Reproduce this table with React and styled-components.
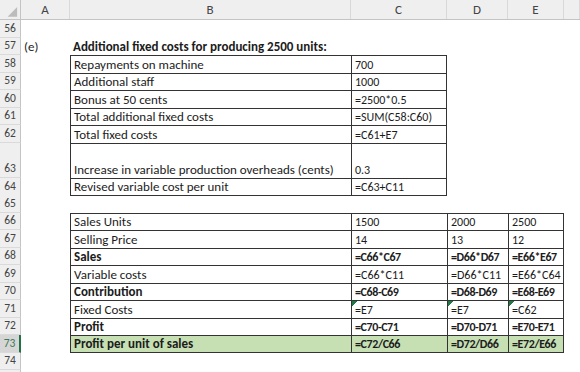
import React from 'react'
import styled, { createGlobalStyle } from 'styled-components'

const GlobalStyle = createGlobalStyle`
  html, body {
    margin: 0;
    padding: 0;
    background: #fff;
  }
  body {
    font-family: Carlito, Calibri, Lato, "Open Sans", sans-serif;
    color: #1c1c1c;
  }
`

// row header, A, B, C, D, E, F
const COLS = '21px 49px 281px 96px 61px 56px 1fr'
const ROW_H = 17.5

const rows = [
  { n: 56 },
  { n: 57, a: '(e)', b: 'Additional fixed costs for producing 2500 units:', titleBold: true },
  { n: 58, box: 2, top: true, b: 'Repayments on machine', c: '700' },
  { n: 59, box: 2, b: 'Additional staff', c: '1000' },
  { n: 60, box: 2, b: 'Bonus at 50 cents', c: '=2500*0.5' },
  { n: 61, box: 2, b: 'Total additional fixed costs', c: '=SUM(C58:C60)' },
  { n: 62, box: 2, b: 'Total fixed costs', c: '=C61+E7' },
  { n: 63, h: 2, box: 2, b: 'Increase in variable production overheads (cents)', c: '0.3' },
  { n: 64, box: 2, bottom: true, b: 'Revised variable cost per unit', c: '=C63+C11' },
  { n: 65 },
  { n: 66, box: 4, top: true, b: 'Sales Units', c: '1500', d: '2000', e: '2500' },
  { n: 67, box: 4, b: 'Selling Price', c: '14', d: '13', e: '12' },
  { n: 68, box: 4, bold: true, b: 'Sales', c: '=C66*C67', d: '=D66*D67', e: '=E66*E67' },
  { n: 69, box: 4, b: 'Variable costs', c: '=C66*C11', d: '=D66*C11', e: '=E66*C64' },
  { n: 70, box: 4, bold: true, b: 'Contribution', c: '=C68-C69', d: '=D68-D69', e: '=E68-E69' },
  { n: 71, box: 4, flag: true, b: 'Fixed Costs', c: '=E7', d: '=E7', e: '=C62' },
  { n: 72, box: 4, bold: true, b: 'Profit', c: '=C70-C71', d: '=D70-D71', e: '=E70-E71' },
  { n: 73, box: 4, bold: true, fill: true, selected: true, bottom: true, b: 'Profit per unit of sales', c: '=C72/C66', d: '=D72/D66', e: '=E72/E66' },
  { n: 74 },
  { n: '' },
]

const App = () => {
  return (
    <>
      <GlobalStyle />
      <Sheet>
        <HeaderRow>
          <Corner>
            <svg width="21" height="19" viewBox="0 0 21 19">
              <polygon points="18,7 18,17 8,17" fill="#bcbcbc" />
            </svg>
          </Corner>
          {['A', 'B', 'C', 'D', 'E', ''].map((l, i) => (
            <ColHead key={i}>{l}</ColHead>
          ))}
        </HeaderRow>

        {rows.map((r, idx) => {
          const vals = [r.a, r.b, r.c, r.d, r.e, '']
          return (
            <Row key={idx} $h={(r.h || 1) * ROW_H}>
              <RowHead $selected={r.selected}>{r.n}</RowHead>
              {vals.map((v, i) => {
                // columns B..E are 1..4
                const inBox = r.box && i >= 1 && i <= r.box
                return (
                  <Cell
                    key={i}
                    $box={inBox}
                    $top={inBox && r.top}
                    $bottom={inBox && r.bottom}
                    $last={inBox && i === r.box}
                    $bold={r.bold || (r.titleBold && i === 1)}
                    $num={i >= 2}
                    $fill={inBox && r.fill}
                    $flag={inBox && r.flag && i > 1}
                  >
                    {v}
                  </Cell>
                )
              })}
            </Row>
          )
        })}
      </Sheet>
    </>
  )
}

const Sheet = styled.div`
  width: 580px;
  height: 372px;
  overflow: hidden;
  background: #fff;
`

const HeaderRow = styled.div`
  display: grid;
  grid-template-columns: ${COLS};
  height: 20px;
  background: #efefef;
  border-bottom: 1px solid #c4c4c4;
  box-sizing: border-box;
`

const Corner = styled.div`
  border-right: 1px solid #c4c4c4;
  display: flex;
`

const ColHead = styled.div`
  border-right: 1px solid #d9d9d9;
  display: flex;
  align-items: center;
  justify-content: center;
  font-size: 13px;
  color: #444;
`

const Row = styled.div`
  display: grid;
  grid-template-columns: ${COLS};
  height: ${(p) => p.$h}px;
`

const RowHead = styled.div`
  background: ${(p) => (p.$selected ? '#d6d6d6' : '#efefef')};
  color: ${(p) => (p.$selected ? '#3f7a56' : '#444')};
  border-right: ${(p) => (p.$selected ? '2px solid #217346' : '1px solid #c4c4c4')};
  border-bottom: 1px solid #dadada;
  box-sizing: border-box;
  display: flex;
  align-items: flex-end;
  justify-content: center;
  padding-bottom: 2px;
  font-size: 11.5px;
`

const Cell = styled.div`
  box-sizing: border-box;
  display: flex;
  align-items: flex-end;
  padding: 0 3px 1px;
  white-space: nowrap;
  font-size: ${(p) => (p.$num ? '12px' : '13px')};
  letter-spacing: ${(p) => (p.$num && p.$bold ? '-0.4px' : '0')};
  font-weight: ${(p) => (p.$bold ? 700 : 400)};
  background: ${(p) =>
    p.$fill
      ? '#c6e0b4'
      : p.$flag
      ? 'linear-gradient(135deg, #1f7a45 0, #1f7a45 4px, transparent 4px)'
      : 'transparent'};
  border-left: ${(p) => (p.$box ? '1px solid #333' : 'none')};
  border-top: ${(p) => (p.$box ? '1px solid #333' : 'none')};
  border-right: ${(p) => (p.$last ? '1px solid #333' : 'none')};
  border-bottom: ${(p) => (p.$bottom ? '1px solid #333' : 'none')};
`

export default App
